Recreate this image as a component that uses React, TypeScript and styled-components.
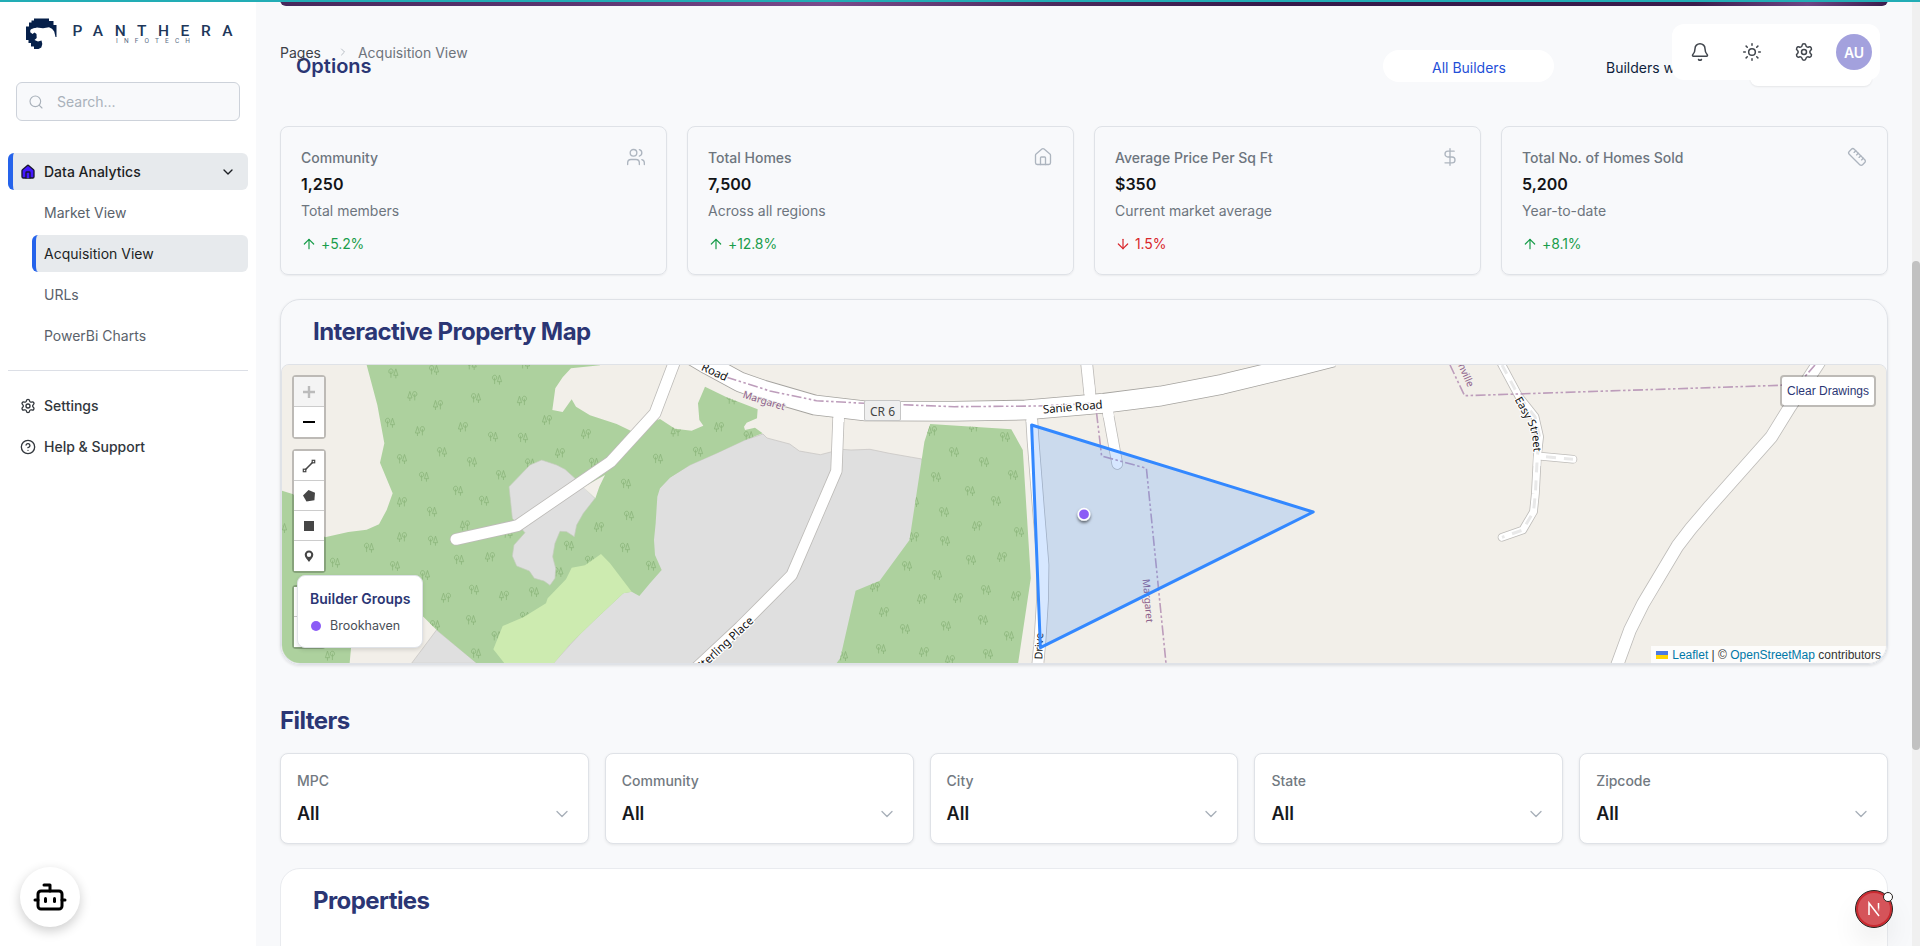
import React from "react";
import styled, { createGlobalStyle, css } from "styled-components";
import {
  ArrowDown,
  ArrowUp,
  Bell,
  Bot,
  ChevronDown,
  ChevronRight,
  CircleHelp,
  DollarSign,
  House,
  Ruler,
  Search,
  Settings,
  Sun,
  Users,
} from "lucide-react";

const navy = "#2b3674";
const border = "#dfe2e7";
const sans = `Inter, "Liberation Sans", sans-serif`;

const GlobalStyle = createGlobalStyle`
  * { box-sizing: border-box; }
  body { margin: 0; background: #f8f9fb; font-family: ${sans}; font-size: 14px; color: #16191d; overflow: hidden; }
  svg { display: block; flex: none; }
`;

const Page = styled.div`
  position: relative;
  display: flex;
  height: 946px;
  overflow: hidden;
`;

const ProgressLine = styled.div`
  position: absolute;
  inset: 0 0 auto 0;
  height: 2px;
  background: #22adb5;
  z-index: 20;
`;

/* ---------- sidebar ---------- */

const Sidebar = styled.aside`
  width: 256px;
  flex: none;
  background: #fff;
  display: flex;
  flex-direction: column;
  padding: 0 8px;
`;

const LogoBox = styled.div`
  height: 82px;
  padding: 13px 8px 0;
`;

const SearchBox = styled.div`
  display: flex;
  align-items: center;
  gap: 13px;
  height: 39px;
  margin: 0 8px 32px;
  padding: 0 11px;
  border: 1px solid #cdd2da;
  border-radius: 6px;
  background: #f8f9fb;
  color: #a9b1ba;
`;

const Nav = styled.nav`
  display: flex;
  flex-direction: column;
  gap: 4px;
`;

const NavItem = styled.a<{ $active?: boolean; $sub?: boolean }>`
  display: flex;
  align-items: center;
  gap: 8px;
  height: 37px;
  border-radius: 6px;
  padding: 0 12px;
  font-weight: 500;
  color: #32373d;
  ${(p) =>
    p.$sub &&
    css`
      margin-left: 24px;
      font-weight: 400;
      color: #5a626b;
    `}
  ${(p) =>
    p.$active &&
    css`
      background: #e7eaed;
      color: #1c1f24;
      border-left: ${p.$sub ? 4 : 5}px solid #2563eb;
      padding-left: ${p.$sub ? 8 : 7}px;
    `}
`;

const Grow = styled.span`
  flex: 1;
`;

const Divider = styled.div`
  height: 1px;
  background: #dcdfe6;
  margin: 16px 0;
`;

const BotButton = styled.button`
  position: absolute;
  left: 20px;
  top: 867px;
  width: 60px;
  height: 60px;
  display: grid;
  place-items: center;
  padding: 0;
  border: 0;
  border-radius: 50%;
  background: #fff;
  color: #000;
  box-shadow: 0 4px 12px rgba(0, 0, 0, 0.2);
`;

/* ---------- main column ---------- */

const Main = styled.main`
  flex: 1;
  display: flex;
  flex-direction: column;
  padding: 0 24px;
  height: 1100px;
`;

const Banner = styled.div`
  height: 6px;
  flex: none;
  border-radius: 0 0 8px 8px;
  background: linear-gradient(90deg, #47285c 0, #5b3571 18%, #7a4b8c 34%, #4b2a5d 48%, #35194a 62%, #3a1c4c 88%, #6d4585 95%, #3a1c4c 100%);
`;

const OptionsRow = styled.div`
  display: flex;
  height: 120px;
  flex: none;
  padding: 44px 16px 0;
`;

const OptionsTitle = styled.h2`
  margin: 0;
  flex: 1;
  font-size: 20px;
  line-height: 32px;
  font-weight: 600;
  color: ${navy};
`;

const BuilderTab = styled.button<{ $on?: boolean }>`
  width: 171px;
  height: 32px;
  padding: ${(p) => (p.$on ? "4px 0 0 1px" : "4px 0 0 15px")};
  border: 0;
  border-radius: 16px;
  font: 400 14px/18px ${sans};
  text-align: ${(p) => (p.$on ? "center" : "left")};
  white-space: nowrap;
  background: ${(p) => (p.$on ? "#fff" : "transparent")};
  color: ${(p) => (p.$on ? "#1f50d8" : "#0f1f3d")};
`;

const Tabs = styled.div`
  display: flex;
  gap: 37px;
  width: 489px;
`;

const Breadcrumb = styled.div`
  position: absolute;
  left: 280px;
  top: 43px;
  display: flex;
  align-items: center;
  line-height: 20px;
  color: #6e747c;
  z-index: 5;
`;

const Crumb = styled.span`
  color: #3c4147;
`;

const CrumbArrow = styled(ChevronRight)`
  margin: 0 9px 2px 16px;
  color: #b8bec5;
`;

const HeaderMenu = styled.div`
  position: absolute;
  left: 1672px;
  top: 24px;
  width: 208px;
  height: 56px;
  border-radius: 12px;
  background: #fff;
  display: flex;
  align-items: center;
  gap: 32px;
  padding-left: 18px;
  color: #41464d;
  z-index: 6;
`;

const MenuShade = styled.div`
  position: absolute;
  left: 1750px;
  top: 50px;
  width: 122px;
  height: 36px;
  border-radius: 8px;
  background: #fff;
  box-shadow: 0 1px 2px rgba(0, 0, 0, 0.08);
`;

const Avatar = styled.div`
  width: 36px;
  height: 36px;
  flex: none;
  border-radius: 50%;
  margin-left: -10px;
  background: #a3a1dd;
  color: #fff;
  font-weight: 600;
  line-height: 37px;
  text-align: center;
`;

const StatGrid = styled.section`
  display: grid;
  grid-template-columns: repeat(4, 1fr);
  gap: 20px;
  margin-bottom: 24px;
`;

const StatCard = styled.article`
  position: relative;
  height: 149px;
  padding: 20px 20px 0;
  border: 1px solid ${border};
  border-radius: 8px;
  box-shadow: 0 1px 2px rgba(0, 0, 0, 0.06);
  color: #6d757e;
  line-height: 22px;
`;

const StatHead = styled.div`
  display: flex;
  justify-content: space-between;
  font-weight: 450;
  height: 23px;
  svg {
    color: #adb5bf;
  }
`;

const StatValue = styled.div`
  font-size: 16px;
  font-weight: 600;
  color: #121417;
  line-height: 28px;
  height: 28px;
`;

const StatNote = styled.div`
  height: 22px;
  margin-top: 2px;
`;

const Trend = styled.div<{ $down?: boolean }>`
  display: flex;
  align-items: center;
  gap: 4px;
  margin-top: 11px;
  letter-spacing: -0.1px;
  color: ${(p) => (p.$down ? "#d9262c" : "#1a9d4b")};
`;

const SectionTitle = styled.h2`
  margin: 0;
  font-size: 24px;
  line-height: 32px;
  font-weight: 700;
  letter-spacing: -0.57px;
  color: ${navy};
`;

const MapCard = styled.section`
  height: 366px;
  flex: none;
  border: 1px solid ${border};
  border-radius: 20px;
  overflow: hidden;
  box-shadow: 0 1px 3px rgba(0, 0, 0, 0.1);
  ${SectionTitle} {
    padding: 16px 32px;
  }
`;

const MapFrame = styled.div`
  position: relative;
  height: 300px;
  border: 1px solid ${border};
  border-radius: 8px 8px 19px 19px;
  overflow: hidden;
  background: #f2efe9;
`;

const Controls = styled.div`
  position: absolute;
  left: 10px;
  top: 10px;
  display: flex;
  flex-direction: column;
  gap: 10px;
`;

const ControlBar = styled.div<{ $last?: boolean }>`
  border: 2px solid rgba(0, 0, 0, 0.22);
  border-radius: 4px;
  background-clip: padding-box;
  width: 34px;
  margin-top: ${(p) => (p.$last ? 2 : 0)}px;
`;

const ControlButton = styled.div<{ $off?: boolean }>`
  height: 30px;
  display: grid;
  place-items: center;
  background: ${(p) => (p.$off ? "#f4f4f4" : "#fff")};
  color: ${(p) => (p.$off ? "#bbb" : "#000")};
  border-bottom: 1px solid #ccc;
  &:last-child {
    border-bottom: 0;
  }
`;

const Legend = styled.div`
  position: absolute;
  left: 15px;
  top: 210px;
  width: 126px;
  height: 73px;
  padding: 11px 12px;
  border: 1px solid ${border};
  border-radius: 8px;
  background: #fff;
  box-shadow: 0 2px 4px rgba(0, 0, 0, 0.12);
`;

const LegendTitle = styled.div`
  font-weight: 600;
  line-height: 24px;
  color: ${navy};
  white-space: nowrap;
`;

const LegendRow = styled.div`
  display: flex;
  align-items: center;
  gap: 9px;
  margin-top: 5px;
  padding-left: 1px;
  font-size: 12.5px;
  line-height: 20px;
  color: #4a4f57;
`;

const Dot = styled.span`
  width: 10px;
  height: 10px;
  border-radius: 50%;
  background: #8b5cf6;
`;

const ClearButton = styled.button`
  position: absolute;
  right: 10px;
  top: 10px;
  width: 96px;
  height: 32px;
  padding: 0;
  border: 2px solid rgba(0, 0, 0, 0.22);
  border-radius: 4px;
  background: #fff;
  background-clip: padding-box;
  font: 12px "Liberation Sans", sans-serif;
  color: ${navy};
  white-space: nowrap;
`;

const Attribution = styled.div`
  position: absolute;
  right: 0;
  bottom: 0;
  display: flex;
  align-items: center;
  gap: 4px;
  height: 17px;
  padding: 0 5px;
  background: rgba(255, 255, 255, 0.8);
  font: 12px "Liberation Sans", sans-serif;
  color: #333;
  white-space: nowrap;
  a {
    color: #0078a8;
  }
`;

const FilterTitle = styled(SectionTitle)`
  margin: 40px 0 16px;
`;

const FilterGrid = styled.section`
  display: grid;
  grid-template-columns: repeat(5, 1fr);
  gap: 16px;
  margin-bottom: 24px;
`;

const FilterCard = styled.article`
  height: 91px;
  padding: 17px 16px 0;
  background: #fff;
  border: 1px solid ${border};
  border-radius: 8px;
  box-shadow: 0 1px 3px rgba(0, 0, 0, 0.08);
`;

const FilterLabel = styled.div`
  line-height: 20px;
  font-weight: 450;
  color: #727981;
`;

const FilterValue = styled.div`
  display: flex;
  align-items: center;
  justify-content: space-between;
  margin-top: 9px;
  font-size: 18px;
  line-height: 28px;
  font-weight: 600;
  svg {
    color: #a8b0b9;
  }
`;

const PropertiesCard = styled.section`
  flex: 1;
  padding: 16px 32px;
  border: 1px solid #e9ebef;
  border-radius: 20px;
  background: #fff;
`;

const ScrollTrack = styled.div`
  width: 8px;
  background: #f0f0f0;
  padding-top: 261px;
`;

const ScrollThumb = styled.div`
  height: 489px;
  border-radius: 4px;
  background: #c1c1c1;
`;

const DevBadge = styled.div`
  position: absolute;
  left: 1855px;
  top: 890px;
  width: 38px;
  height: 38px;
  border-radius: 50%;
  border: 1px solid #26211f;
  background: #d5545a;
  box-shadow: inset 0 0 0 2px #ca2a30, 0 16px 32px -8px rgba(0, 0, 0, 0.2);
  display: grid;
  place-items: center;
`;

const DevDot = styled.span`
  position: absolute;
  left: 27px;
  top: 1px;
  width: 10px;
  height: 10px;
  border: 1px solid #26211f;
  border-radius: 50%;
  background: #fff;
`;

/* ---------- drawings ---------- */

const Logo = () => (
  <svg width="224" height="50" viewBox="16 13 224 50">
    <path
      fill="#06204a"
      d="M34 18.500H49V21H53.500V25H56.500V37H55.500L54.200 31.500L52 28.800L49 27.200L43 28.300L37 27.600L31.500 29L30 32L32.500 34L34.500 32.500L36.500 34L36.700 38L34.500 40L38 41.500L41.500 40.500L42.300 44L41.300 47.500L38.500 49H34V46.500H31V43H28.500V40H26V26.500H29V22.500H31.500V20.500H34Z"
    />
    <path fill="#fff" d="M30 30L35 28L43 29.200L36 31L34.500 32L32.300 32.800Z" />
    <text
      x="72.500"
      y="35.700"
      fontFamily="Roboto, sans-serif"
      fontWeight="500"
      fontSize="15.500"
      fill="#20375a"
      textLength="160"
    >
      PANTHERA
    </text>
    <text
      x="116"
      y="43.300"
      fontFamily="Roboto, sans-serif"
      fontSize="6.500"
      fill="#5a6b84"
      textLength="74"
    >
      INFOTECH
    </text>
  </svg>
);

const FilledHome = () => (
  <svg width="16" height="16" viewBox="0 0 24 24" fill="#4318ff" stroke="#17172e" strokeWidth="2" strokeLinecap="round" strokeLinejoin="round">
    <path d="M3 10a2 2 0 0 1 .709-1.528l7-6a2 2 0 0 1 2.582 0l7 6A2 2 0 0 1 21 10v9a2 2 0 0 1-2 2H5a2 2 0 0 1-2-2z" />
    <path d="M15 21v-8a1 1 0 0 0-1-1h-4a1 1 0 0 0-1 1v8" />
  </svg>
);

const TreePair = ({ x, y, s = 1, flip }: { x: number; y: number; s?: number; flip?: boolean }) => (
  <g
    transform={`translate(${x} ${y}) scale(${flip ? -s : s} ${s}) translate(-5 -5)`}
    fill="none"
    stroke="#8bb57b"
    strokeWidth="0.8"
  >
    <path d="M2.600 0.600C4.300 0.600 4.700 2 4.700 3.200S4 5.200 2.600 5.200S0.500 4.400 0.500 3.200S1 0.600 2.600 0.600ZM2.600 3V9.400M7.500 0.500L5.400 7H9.600ZM7.500 7V10" />
  </g>
);

type TreeSpot = [number, number, number?];

const westTrees: TreeSpot[] = [
  [370, 250], [492, 240], [681, 269], [427, 318, 1], [504, 345, 1], [618, 324], [756, 332, 1],
  [360, 398], [450, 423, 1], [579, 411, 1], [669, 440], [759, 443], [831, 390, 1], [948, 432, 1],
  [396, 507], [516, 486], [606, 516], [870, 489, 1], [462, 560], [693, 555], [972, 518], [564, 602],
  [642, 632], [396, 636, 1], [486, 665], [585, 706, 1], [396, 741, 1], [489, 752], [297, 773],
  [195, 818], [375, 828], [567, 809], [660, 801, 1], [465, 855], [612, 899], [528, 923, 1],
  [702, 917, 1], [792, 906], [603, 990], [618, 1090], [180, 1097, 1], [897, 767], [987, 711, 1],
  [1077, 677], [1065, 773], [1143, 827], [1068, 581], [1164, 506], [1284, 485], [1347, 411, 1],
  [1217, 425, 1], [1436, 438], [36, 714], [780, 520], [960, 812], [865, 846], [495, 1005],
  [680, 1038], [1385, 328], [713, 730], [605, 225], [765, 222], [765, 980],
];

const eastTrees: TreeSpot[] = [
  [954, 452], [984, 462], [936, 477], [1013, 475], [970, 491], [996, 501], [944, 512], [977, 526, 1],
  [1019, 532], [945, 541], [971, 560], [1002, 557, 1], [907, 566], [937, 575], [986, 590],
  [922, 599, 1], [958, 598, 1], [1016, 596, 1], [884, 612, 1], [983, 620], [946, 626], [905, 629],
  [1009, 636], [881, 649], [924, 652, 1], [988, 654], [1005, 437], [932, 431, 1], [914, 537, 1],
  [875, 587, 1], [950, 660, 1], [974, 427, 1], [843, 656], [914, 502],
];

const Road = ({ d, w = 11, casing = "#bdbbb8", cap = "butt" }: { d: string; w?: number; casing?: string; cap?: "butt" | "round" }) => (
  <g fill="none" strokeLinejoin="round" strokeLinecap={cap}>
    <path d={d} stroke={casing} strokeWidth={w + 1.6} />
    <path d={d} stroke="#fff" strokeWidth={w} />
  </g>
);

const sanie = "M690 354L708.700 365L740 382L763 390L814.600 405L866 411L954 411.300L1025 410L1103.500 403.300L1161 396L1222 384.300L1295 366.700L1333 357";
const drive = "M1031.500 415L1033 440L1038.500 510L1043 565L1042.500 600L1040 640L1037.500 668";
const northTop = "M1086.300 360L1090.500 400";
const northTail = "M1106.500 405L1117.300 464";
const placeRoad = "M838.700 412L836.400 471L791.700 575L740 627L695 669";
const woods = "M290 225L322 345L343 460L330 518L368 610L350 660L327 703L290 719L235 726L165 742L110 690L70 613L30 600V1130H238L243 1075L300 1000L460 980L500 1020L620 1120H850L900 1062L980 985L1060 910L1085 905L1108 918L1140 880L1175 840L1155 795L1152 750L1157 700L1162 620L1170 595L1200 563L1260 525L1340 490L1425 450L1478 430L1455 413L1425 420L1422 410L1430 398L1461 385L1463 358L1370 322L1305 290L1284 340L1288 390L1300 407L1265 422L1215 416L1170 387L1082 422L1040 402L960 376L918 350L905 328L878 366L847 360L856 295L878 262L903 235L990 226V215H288Z";
const eastWoods = "M930.200 424L1011.300 429.300L1022.800 450L1030.800 578.300L1018 664H836L840.300 658L855.600 590.700L879.700 580.700L909.500 540L921.800 459L924.400 441.700Z";

const MapDrawing = () => (
  <svg width="1604" height="298" viewBox="282 365 1604 298">
    <defs>
      <clipPath id="west">
        <path d={woods} />
      </clipPath>
      <clipPath id="east">
        <path d={eastWoods} />
      </clipPath>
      <path id="easy" d="M1514.500 399.500L1522 413L1529.500 426L1532.500 438L1534 456" />
      <filter id="drop" x="-100%" y="-100%" width="300%" height="300%">
        <feDropShadow dx="0" dy="2" stdDeviation="1.800" floodOpacity="0.55" />
      </filter>
    </defs>
    <rect x="282" y="365" width="1604" height="298" fill="#f2efe9" />
    <g fill="#dfdfdf" stroke="#c9c6c4" strokeWidth="0.8">
      <path d="M553.300 663.300L620 590L640 560L650 540V498L670 477L690 465L717 453L745 440L763 434L767 438L789.700 444L799.300 451L820.400 454.700L841.400 449.300L851 450L870 449.300L889.200 453.300L921.800 459L940 540V664H553Z" />
      <path d="M411.600 663.300L436.500 630L477 663.300Z" />
    </g>
    <g transform="translate(270 290) scale(0.33333)">
      <path d={woods} fill="#add19e" />
      <g clipPath="url(#west)">
        {westTrees.map(([x, y, f]) => (
          <TreePair key={`${x}-${y}`} x={x} y={y} s={3} flip={!!f} />
        ))}
      </g>
      <path
        fill="#dfdfdf"
        stroke="#c4cbbd"
        strokeWidth="2"
        d="M815 510L780 525L717 590L727 685L765 728L732 765L727 798L740 828L778 843L793 865L822 873L840 886L855 865L857 835L848 800L855 760L870 724L890 725L913 740L920 705L940 670L975 625L945 595L915 565L885 538L860 525Z"
      />
      <path fill="#f2efe9" d="M940 592L1005 555L988 590L976 625Z" />
      <path
        fill="#cdebb0"
        d="M993 792L1020 820L1085 905L1060 910L980 985L900 1062L850 1122H705L670 1078L698 1008L760 982L828 940L833 925L888 868L905 833L945 826Z"
      />
    </g>
    <path d={eastWoods} fill="#add19e" />
    <g clipPath="url(#east)">
      {eastTrees.map(([x, y, f]) => (
        <TreePair key={`${x}-${y}`} x={x} y={y} flip={!!f} />
      ))}
    </g>

    <Road d="M676 358L673.300 365L655 413.300L610.700 461.700L517.300 525.700L456 539.300" cap="round" />
    <Road d={placeRoad} w={10.5} />
    <Road d={drive} w={11} />
    <Road d={northTop} w={11} />
    <Road d={northTail} w={10} cap="round" />
    <Road d={sanie} w={19} casing="#a5a39f" />
    <g fill="none" stroke="#fff" strokeWidth="10.500">
      <path d="M838.700 408V422" />
      <path d="M1031.500 408L1031.700 422" />
      <path d="M1089 385L1090.500 400" />
      <path d="M1106.800 404L1108.800 417" />
    </g>
    <Road d="M1499 359L1502 365L1519 396.700L1535 416.700L1539.600 436.700L1537.300 456.700L1535.400 493.300L1533.500 511.700L1522.800 530L1502 537.300" w={7} cap="round" />
    <Road d="M1538 456L1573 459.300" w={7} cap="round" />
    <g fill="none" stroke="#fff" strokeWidth="7">
      <path d="M1538.400 447L1537.300 456.700L1537 466" />
    </g>
    <g fill="none" stroke="#e9e9e9" strokeWidth="3" strokeDasharray="10 8" strokeLinejoin="round">
      <path d="M1502 365L1519 396.700L1535 416.700L1539.600 436.700L1537.300 456.700L1535.400 493.300L1533.500 511.700L1522.800 530L1502 537.300" />
      <path d="M1546 456.700L1573 459.300" />
    </g>
    <Road d="M1820.500 360L1817.400 365L1790 406.700L1771.500 436.700L1710 506L1690.500 529L1677.500 546L1643.300 603.300L1630 630L1615 671" w={12} />

    <g fill="none" stroke="#bd9dbb" strokeWidth="1.600" strokeDasharray="10 2.500 2.500 2.500 2.500 2.500">
      <path d="M726.700 377.300L770 391L816.500 400.700L864.400 403.300L954.300 406.700L1038.500 406L1096 403.300L1096.600 413.300L1101.600 456L1146.400 468.300L1166 663.300" />
      <path d="M1450 365L1464.600 395.700L1781 385.300L1801 381L1815 365" />
    </g>

    <g fontFamily='"Noto Sans", sans-serif' textAnchor="middle">
      <g fontSize="11.500" fill="#111" stroke="#fff" strokeWidth="2.500" paintOrder="stroke" strokeLinejoin="round">
        <text transform="translate(1073 411) rotate(-5)">Sanie Road</text>
        <text transform="translate(713 375.500) rotate(25)">Road</text>
        <text transform="translate(727.500 646.500) rotate(-43)">Sterling Place</text>
        <text fontSize="10.800" transform="translate(1042.500 651) rotate(-88)">n Drive</text>
      </g>
      <text fontSize="11" fill="#111" stroke="#fff" strokeWidth="2" paintOrder="stroke" textAnchor="start">
        <textPath href="#easy">Easy Street</textPath>
      </text>
      <g fontSize="10" fill="#8d618b" stroke="#f2efe9" strokeWidth="1.500" paintOrder="stroke">
        <text transform="translate(763 404) rotate(17)">Margaret</text>
        <text transform="translate(1144.500 601) rotate(85)">Margaret</text>
        <text transform="translate(1463 376.500) rotate(66)">nville</text>
      </g>
      <rect x="864.500" y="400.500" width="36" height="20" rx="1.500" fill="#efefef" stroke="#c6c6c6" />
      <text x="882.500" y="415.500" fontSize="12" fill="#444">CR 6</text>
    </g>

    <path d="M1031.600 425L1313.200 512L1040.400 647.700Z" fill="#3388ff" fillOpacity="0.2" stroke="#3388ff" strokeWidth="3" strokeLinejoin="round" />
    <circle cx="1084" cy="514.300" r="5.700" fill="#8b5cf6" stroke="#fff" strokeWidth="1.600" filter="url(#drop)" />
  </svg>
);

const LineTool = () => (
  <svg width="14" height="14" viewBox="0 0 14 14" fill="none" stroke="#464646" strokeWidth="1.200">
    <path d="M3.300 10.700L10.700 3.300" strokeWidth="1.600" />
    <rect x="1.300" y="10.200" width="2.500" height="2.500" />
    <rect x="10.200" y="1.300" width="2.500" height="2.500" />
  </svg>
);

const PolygonTool = () => (
  <svg width="14" height="14" viewBox="0 0 14 14" fill="#464646">
    <path d="M6.500 1L13 3.700L12.400 11.300L4.500 12.600L1 6.500Z" />
  </svg>
);

const PinTool = () => (
  <svg width="12" height="14" viewBox="0 0 12 14" fill="#464646" fillRule="evenodd">
    <path d="M6 1.500A4.300 4.300 0 0 1 10.300 5.800C10.300 8.500 7.500 10.500 6 13C4.500 10.500 1.700 8.500 1.700 5.800A4.300 4.300 0 0 1 6 1.500ZM6 3.600A2.200 2.200 0 1 0 6 8A2.200 2.200 0 1 0 6 3.600Z" />
  </svg>
);

const stats = [
  { label: "Community", value: "1,250", note: "Total members", trend: "+5.2%", Icon: Users },
  { label: "Total Homes", value: "7,500", note: "Across all regions", trend: "+12.8%", Icon: House },
  { label: "Average Price Per Sq Ft", value: "$350", note: "Current market average", trend: "1.5%", down: true, Icon: DollarSign },
  { label: "Total No. of Homes Sold", value: "5,200", note: "Year-to-date", trend: "+8.1%", Icon: Ruler },
];

const filters = ["MPC", "Community", "City", "State", "Zipcode"];

export default function App() {
  return (
    <Page>
      <GlobalStyle />
      <ProgressLine />
      <Sidebar>
        <LogoBox>
          <Logo />
        </LogoBox>
        <SearchBox>
          <Search size={16} strokeWidth={1.7} />
          Search...
        </SearchBox>
        <Nav>
          <NavItem $active>
            <FilledHome />
            Data Analytics
            <Grow />
            <ChevronDown size={16} strokeWidth={2} />
          </NavItem>
          <NavItem $sub>Market View</NavItem>
          <NavItem $sub $active>
            Acquisition View
          </NavItem>
          <NavItem $sub>URLs</NavItem>
          <NavItem $sub>PowerBi Charts</NavItem>
        </Nav>
        <Divider />
        <Nav>
          <NavItem>
            <Settings size={16} />
            Settings
          </NavItem>
          <NavItem>
            <CircleHelp size={16} />
            Help &amp; Support
          </NavItem>
        </Nav>
      </Sidebar>

      <Main>
        <Banner />
        <OptionsRow>
          <OptionsTitle>Options</OptionsTitle>
          <Tabs>
            <BuilderTab $on>All Builders</BuilderTab>
            <BuilderTab>Builders with</BuilderTab>
          </Tabs>
        </OptionsRow>

        <StatGrid>
          {stats.map(({ label, value, note, trend, down, Icon }) => (
            <StatCard key={label}>
              <StatHead>
                {label}
                <Icon size={20} strokeWidth={1.6} />
              </StatHead>
              <StatValue>{value}</StatValue>
              <StatNote>{note}</StatNote>
              <Trend $down={down}>
                {down ? <ArrowDown size={16} strokeWidth={1.8} /> : <ArrowUp size={16} strokeWidth={1.8} />}
                {trend}
              </Trend>
            </StatCard>
          ))}
        </StatGrid>

        <MapCard>
          <SectionTitle>Interactive Property Map</SectionTitle>
          <MapFrame>
            <MapDrawing />
            <Controls>
              <ControlBar>
                <ControlButton $off>
                  <svg width="14" height="14" viewBox="0 0 14 14" stroke="currentColor" strokeWidth="2.400">
                    <path d="M1 7H13M7 1V13" />
                  </svg>
                </ControlButton>
                <ControlButton>
                  <svg width="14" height="14" viewBox="0 0 14 14" stroke="currentColor" strokeWidth="2">
                    <path d="M1 7H13" />
                  </svg>
                </ControlButton>
              </ControlBar>
              <ControlBar>
                <ControlButton><LineTool /></ControlButton>
                <ControlButton><PolygonTool /></ControlButton>
                <ControlButton>
                  <svg width="10" height="10"><rect width="10" height="10" fill="#464646" /></svg>
                </ControlButton>
                <ControlButton><PinTool /></ControlButton>
              </ControlBar>
              <ControlBar $last>
                <ControlButton />
                <ControlButton />
              </ControlBar>
            </Controls>
            <Legend>
              <LegendTitle>Builder Groups</LegendTitle>
              <LegendRow>
                <Dot />
                Brookhaven
              </LegendRow>
            </Legend>
            <ClearButton>Clear Drawings</ClearButton>
            <Attribution>
              <svg width="12" height="8" viewBox="0 0 12 8">
                <rect width="12" height="4" fill="#4c7be1" />
                <rect y="4" width="12" height="4" fill="#ffd500" />
              </svg>
              <span>
                <a>Leaflet</a> | © <a>OpenStreetMap</a> contributors
              </span>
            </Attribution>
          </MapFrame>
        </MapCard>

        <FilterTitle>Filters</FilterTitle>
        <FilterGrid>
          {filters.map((name) => (
            <FilterCard key={name}>
              <FilterLabel>{name}</FilterLabel>
              <FilterValue>
                All
                <ChevronDown size={20} strokeWidth={1.6} />
              </FilterValue>
            </FilterCard>
          ))}
        </FilterGrid>

        <PropertiesCard>
          <SectionTitle>Properties</SectionTitle>
        </PropertiesCard>
      </Main>

      <ScrollTrack>
        <ScrollThumb />
      </ScrollTrack>

      <Breadcrumb>
        <Crumb>Pages</Crumb>
        <CrumbArrow size={12} strokeWidth={2} />
        Acquisition View
      </Breadcrumb>
      <MenuShade />
      <HeaderMenu>
        <Bell size={20} strokeWidth={1.8} />
        <Sun size={20} strokeWidth={1.8} />
        <Settings size={20} strokeWidth={1.8} />
        <Avatar>AU</Avatar>
      </HeaderMenu>

      <BotButton>
        <Bot size={36} strokeWidth={2} />
      </BotButton>
      <DevBadge>
        <svg width="14" height="16" viewBox="0 0 14 16" fill="none" strokeWidth="1.500">
          <defs>
            <linearGradient id="fade" x1="0" y1="0" x2="0" y2="1">
              <stop offset="0.5" stopColor="#fff" />
              <stop offset="1" stopColor="#fff" stopOpacity="0" />
            </linearGradient>
          </defs>
          <path d="M2 14V2L12 15" stroke="#fff" />
          <path d="M11.500 2L11.600 11" stroke="url(#fade)" />
        </svg>
        <DevDot />
      </DevBadge>
    </Page>
  );
}
